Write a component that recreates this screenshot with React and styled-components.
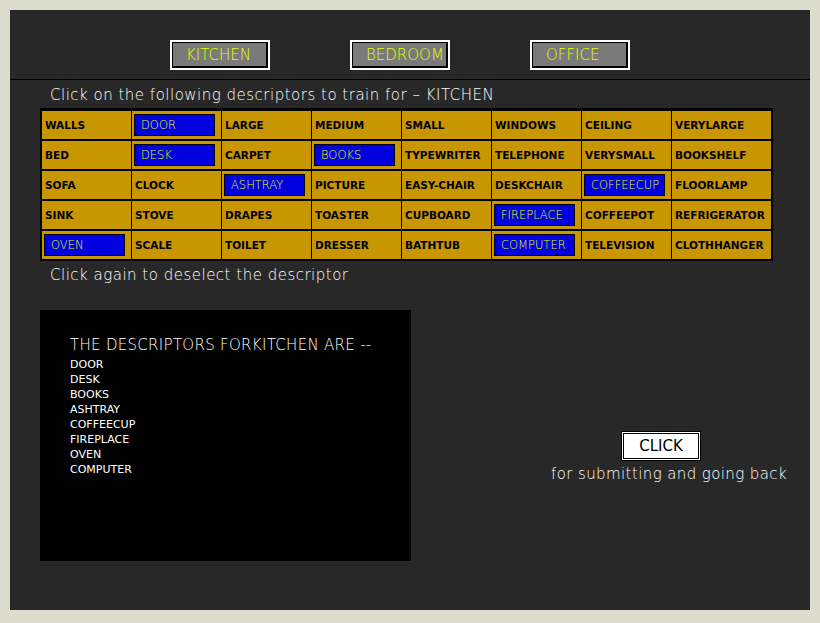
import { useState } from "react";
import styled, { createGlobalStyle } from "styled-components";

const GlobalStyle = createGlobalStyle`
  body {
    margin: 0;
    background: #dcdccc;
    font-family: "DejaVu Sans", "Liberation Sans", sans-serif;
  }
`;

const rows = [
  ["WALLS", "DOOR", "LARGE", "MEDIUM", "SMALL", "WINDOWS", "CEILING", "VERYLARGE"],
  ["BED", "DESK", "CARPET", "BOOKS", "TYPEWRITER", "TELEPHONE", "VERYSMALL", "BOOKSHELF"],
  ["SOFA", "CLOCK", "ASHTRAY", "PICTURE", "EASY-CHAIR", "DESKCHAIR", "COFFEECUP", "FLOORLAMP"],
  ["SINK", "STOVE", "DRAPES", "TOASTER", "CUPBOARD", "FIREPLACE", "COFFEEPOT", "REFRIGERATOR"],
  ["OVEN", "SCALE", "TOILET", "DRESSER", "BATHTUB", "COMPUTER", "TELEVISION", "CLOTHHANGER"],
];

const initial = ["DOOR", "DESK", "BOOKS", "ASHTRAY", "COFFEECUP", "FIREPLACE", "OVEN", "COMPUTER"];

const App = () => {
  const [room, setRoom] = useState("KITCHEN");
  const [picked, setPicked] = useState(initial);

  const toggle = (word) => {
    setPicked((p) => (p.includes(word) ? p.filter((w) => w !== word) : [...p, word]));
  };

  return (
    <>
      <GlobalStyle />
      <Frame>
        <TopBar>
          {["KITCHEN", "BEDROOM", "OFFICE"].map((r) => (
            <RoomButton key={r} onClick={() => setRoom(r)}>
              {r}
            </RoomButton>
          ))}
        </TopBar>
        <Body>
          <Caption>Click on the following descriptors to train for – {room}</Caption>
          <Grid>
            {rows.flat().map((word) => (
              <Cell key={word} onClick={() => toggle(word)}>
                {picked.includes(word) ? <Picked>{word}</Picked> : word}
              </Cell>
            ))}
          </Grid>
          <Caption $top={4}>Click again to deselect the descriptor</Caption>
          <Bottom>
            <Summary>
              <SummaryTitle>THE DESCRIPTORS FOR{room} ARE --</SummaryTitle>
              {picked.map((w) => (
                <SummaryItem key={w}>{w}</SummaryItem>
              ))}
            </Summary>
            <Submit>
              <ClickButton>CLICK</ClickButton>
              <SubmitNote>for submitting and going back</SubmitNote>
            </Submit>
          </Bottom>
        </Body>
      </Frame>
    </>
  );
};

const panel = "#282828";
const gold = "#c89600";
const blue = "#0000e0";
const lime = "#e2ff00";

const Frame = styled.div`
  margin: 10px;
  width: 800px;
  height: 600px;
  background: ${panel};
  overflow: hidden;
`;

const TopBar = styled.div`
  display: flex;
  gap: 80px;
  height: 70px;
  box-sizing: border-box;
  padding: 30px 0 0 160px;
  border-bottom: 1px solid #000;
`;

const RoomButton = styled.button`
  width: 100px;
  height: 30px;
  box-sizing: border-box;
  background: #7a7a7a;
  border: 2px solid #fff;
  box-shadow: inset 1px 1px 0 #000, inset -2px -2px 0 #000;
  color: ${lime};
  font-family: "DejaVu Sans", "Liberation Sans", sans-serif;
  font-weight: 200;
  font-size: 15px;
  text-align: left;
  padding: 0 0 0 14px;
  cursor: pointer;
`;

const Body = styled.div`
  padding-left: 30px;
`;

const Caption = styled.div`
  margin: ${(p) => p.$top || 5}px 0 0 10px;
  height: 23px;
  line-height: 20px;
  color: #fff;
  font-size: 15px;
  font-weight: 200;
  letter-spacing: 0.5px;
`;

const Grid = styled.div`
  display: grid;
  grid-template-columns: repeat(7, 89px) 99px;
  grid-auto-rows: 28px;
  column-gap: 1px;
  row-gap: 2px;
  width: max-content;
  background: #000;
  border: 2px solid #000;
  border-top-width: 3px;
`;

const Cell = styled.div`
  display: flex;
  align-items: center;
  background: ${gold};
  color: #000;
  font-size: 10.5px;
  font-weight: bold;
  padding-left: 3px;
  white-space: nowrap;
  overflow: hidden;
  cursor: pointer;
`;

const Picked = styled.span`
  display: flex;
  align-items: center;
  box-sizing: border-box;
  width: 81px;
  height: 22px;
  margin-left: -1px;
  padding-left: 6px;
  background: ${blue};
  border: 1px solid #000;
  color: ${lime};
  font-weight: 200;
  font-size: 11.5px;
`;

const Bottom = styled.div`
  display: flex;
  margin-top: 22px;
`;

const Summary = styled.div`
  width: 371px;
  height: 251px;
  box-sizing: border-box;
  background: #000;
  padding: 25px 0 0 30px;
  color: #fff;
`;

const SummaryTitle = styled.div`
  font-size: 15px;
  font-weight: 200;
  letter-spacing: 0.3px;
  line-height: 20px;
  margin-bottom: 2px;
`;

const SummaryItem = styled.div`
  font-size: 11px;
  line-height: 15px;
`;

const Submit = styled.div`
  display: flex;
  flex-direction: column;
  align-items: flex-start;
  padding: 121px 0 0 140px;
`;

const ClickButton = styled.button`
  width: 80px;
  height: 30px;
  margin-left: 70px;
  box-sizing: border-box;
  background: #fff;
  border: 2px solid #fff;
  box-shadow: inset 0 0 0 1px #000;
  outline: 1px solid #000;
  outline-offset: -1px;
  color: #000;
  font-family: "DejaVu Sans", "Liberation Sans", sans-serif;
  font-size: 15px;
  cursor: pointer;
`;

const SubmitNote = styled.div`
  margin-top: 4px;
  color: #fff;
  font-size: 15px;
  font-weight: 200;
  letter-spacing: 0.4px;
`;

export default App;
